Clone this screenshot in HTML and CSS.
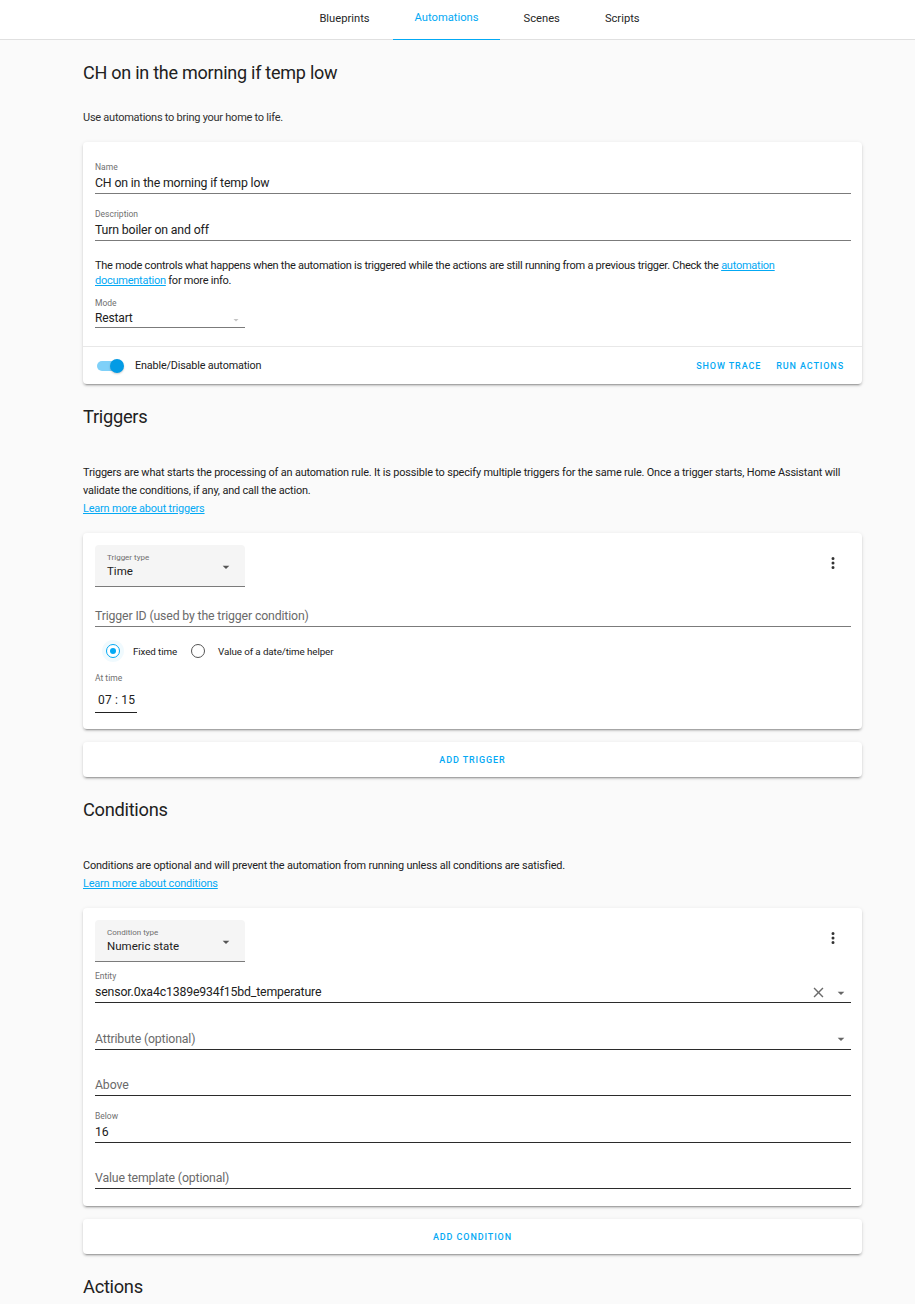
FILE: index.html
```html
<!DOCTYPE html>
<html lang="en">
<head>
<meta charset="utf-8">
<title>Automation editor</title>
<link rel="stylesheet" href="styles.css">
</head>
<body>
<header class="topbar">
  <nav class="tabs">
    <span class="tab">Blueprints</span>
    <span class="tab active">Automations</span>
    <span class="tab">Scenes</span>
    <span class="tab">Scripts</span>
  </nav>
</header>

<main class="content">
  <h1 class="page-title">CH on in the morning if temp low</h1>
  <p class="intro">Use automations to bring your home to life.</p>

  <section class="card">
    <div class="card-body first">
      <div class="field">
        <div class="f-label">Name</div>
        <div class="f-value">CH on in the morning if temp low</div>
      </div>
      <div class="field">
        <div class="f-label">Description</div>
        <div class="f-value">Turn boiler on and off</div>
      </div>
      <p class="mode-text">The mode controls what happens when the automation is triggered while the actions are still running from a previous trigger. Check the <a class="link">automation</a><br><a class="link">documentation</a> for more info.</p>
      <div class="field mode">
        <div class="f-label">Mode</div>
        <div class="f-value">Restart
          <svg class="drop light" viewBox="0 0 24 24"><path d="M7,10L12,15L17,10H7Z"/></svg>
        </div>
      </div>
    </div>
    <div class="card-actions">
      <div class="toggle-wrap">
        <span class="toggle"><span class="track"></span><span class="knob"></span></span>
        <span class="toggle-label">Enable/Disable automation</span>
      </div>
      <div class="btns">
        <span class="btn">Show trace</span>
        <span class="btn">Run actions</span>
      </div>
    </div>
  </section>

  <h2 class="section-title">Triggers</h2>
  <p class="section-text">Triggers are what starts the processing of an automation rule. It is possible to specify multiple triggers for the same rule. Once a trigger starts, Home Assistant will validate the conditions, if any, and call the action.<br><a class="link">Learn more about triggers</a></p>

  <section class="card">
    <div class="card-body boxed">
      <div class="type-row">
        <div class="select-box">
          <div class="sb-label">Trigger type</div>
          <div class="sb-value">Time</div>
          <svg class="drop dark" viewBox="0 0 24 24"><path d="M7,10L12,15L17,10H7Z"/></svg>
        </div>
        <svg class="kebab" viewBox="0 0 24 24"><path d="M12,16A2,2 0 0,1 14,18A2,2 0 0,1 12,20A2,2 0 0,1 10,18A2,2 0 0,1 12,16M12,10A2,2 0 0,1 14,12A2,2 0 0,1 12,14A2,2 0 0,1 10,12A2,2 0 0,1 12,10M12,4A2,2 0 0,1 14,6A2,2 0 0,1 12,8A2,2 0 0,1 10,6A2,2 0 0,1 12,4Z"/></svg>
      </div>
      <div class="field after-box">
        <div class="f-label"></div>
        <div class="f-value placeholder">Trigger ID (used by the trigger condition)</div>
      </div>
      <div class="radios">
        <span class="radio checked"><span class="dot"></span></span>
        <span class="radio-label">Fixed time</span>
        <span class="radio"></span>
        <span class="radio-label">Value of a date/time helper</span>
      </div>
      <div class="time-field">
        <div class="f-label">At time</div>
        <div class="time-value">07 : 15</div>
      </div>
    </div>
  </section>

  <section class="card add-card"><span class="btn">Add trigger</span></section>

  <h2 class="section-title">Conditions</h2>
  <p class="section-text">Conditions are optional and will prevent the automation from running unless all conditions are satisfied.<br><a class="link">Learn more about conditions</a></p>

  <section class="card">
    <div class="card-body boxed cond">
      <div class="type-row">
        <div class="select-box">
          <div class="sb-label">Condition type</div>
          <div class="sb-value">Numeric state</div>
          <svg class="drop dark" viewBox="0 0 24 24"><path d="M7,10L12,15L17,10H7Z"/></svg>
        </div>
        <svg class="kebab" viewBox="0 0 24 24"><path d="M12,16A2,2 0 0,1 14,18A2,2 0 0,1 12,20A2,2 0 0,1 10,18A2,2 0 0,1 12,16M12,10A2,2 0 0,1 14,12A2,2 0 0,1 12,14A2,2 0 0,1 10,12A2,2 0 0,1 12,10M12,4A2,2 0 0,1 14,6A2,2 0 0,1 12,8A2,2 0 0,1 10,6A2,2 0 0,1 12,4Z"/></svg>
      </div>
      <div class="field after-box dark-line">
        <div class="f-label">Entity</div>
        <div class="f-value">sensor.0xa4c1389e934f15bd_temperature
          <span class="icons">
            <svg class="close" viewBox="0 0 24 24"><path d="M19,6.41L17.59,5L12,10.59L6.41,5L5,6.41L10.59,12L5,17.59L6.41,19L12,13.41L17.59,19L19,17.59L13.41,12L19,6.41Z"/></svg>
            <svg class="drop mid" viewBox="0 0 24 24"><path d="M7,10L12,15L17,10H7Z"/></svg>
          </span>
        </div>
      </div>
      <div class="field dark-line">
        <div class="f-label"></div>
        <div class="f-value placeholder">Attribute (optional)
          <span class="icons"><svg class="drop mid" viewBox="0 0 24 24"><path d="M7,10L12,15L17,10H7Z"/></svg></span>
        </div>
      </div>
      <div class="field dark-line">
        <div class="f-label"></div>
        <div class="f-value placeholder">Above</div>
      </div>
      <div class="field dark-line">
        <div class="f-label">Below</div>
        <div class="f-value">16</div>
      </div>
      <div class="field dark-line">
        <div class="f-label"></div>
        <div class="f-value placeholder">Value template (optional)</div>
      </div>
    </div>
  </section>

  <section class="card add-card"><span class="btn">Add condition</span></section>

  <h2 class="section-title">Actions</h2>
</main>
</body>
</html>
```

FILE: styles.css
```css
* { box-sizing: border-box; }

html, body {
  margin: 0;
  padding: 0;
  background: #fafafa;
  font-family: Roboto, "Liberation Sans", Arial, sans-serif;
  color: #212121;
}

.topbar {
  height: 40px;
  background: #ffffff;
  border-bottom: 1px solid #e0e0e0;
}

.tabs {
  display: flex;
  justify-content: center;
  padding-left: 44px;
  height: 39px;
}

.tab {
  display: flex;
  align-items: center;
  padding: 0 22.5px 3px;
  font-size: 11.2px;
  font-weight: 400;
  color: #262626;
}

.tab.active {
  color: #03a9f4;
  padding: 0 21.5px 5px;
  border-bottom: 1px solid #03a9f4;
  height: 40px;
  margin: 0 1px -1px;
}

.content {
  padding: 0 53px 0 83px;
}

.page-title {
  margin: 21px 0 0;
  font-size: 18px;
  line-height: 24px;
  font-weight: 400;
  color: #212121;
  letter-spacing: -0.25px;
}

.intro {
  margin: 24px 0 0;
  font-size: 11px;
  line-height: 18px;
  color: #303030;
  letter-spacing: -0.25px;
}

.card {
  background: #ffffff;
  border-radius: 4px;
  box-shadow: 0 2px 2px 0 rgba(0,0,0,0.14), 0 1px 4px 0 rgba(0,0,0,0.10), 0 3px 1px -2px rgba(0,0,0,0.2);
  margin-top: 15px;
}

.card-body {
  padding: 19px 11px 18px 12px;
}

.card-body.boxed {
  padding: 12px 11px 16px 12px;
}

.card-body.cond {
  padding-bottom: 17px;
}

.field {
  margin-top: 14px;
  border-bottom: 1px solid #7b7b7b;
}

.cond .field { margin-top: 13.5px; }
.field:first-child { margin-top: 0; }
.field.after-box { margin-top: 7px; }
.cond .field.after-box { margin-top: 8px; }
.field.dark-line { border-bottom-color: #2b2b2b; }

.f-label {
  height: 12px;
  font-size: 8.5px;
  line-height: 12px;
  color: #6f6f6f;
  margin-bottom: 2px;
}

.f-value {
  position: relative;
  font-size: 12.3px;
  line-height: 16px;
  padding-bottom: 2px;
  color: #212121;
  letter-spacing: -0.15px;
}

.f-value.placeholder { color: #6a6a6a; }

.mode-text {
  margin: 17px 0 0;
  font-size: 11px;
  line-height: 15px;
  color: #212121;
  letter-spacing: -0.25px;
}

.link {
  color: #03a9f4;
  text-decoration: underline;
}

.field.mode {
  width: 150px;
  margin-top: 9px;
}

.field.mode .f-label { margin-bottom: 2px; }
.field.mode .f-value { line-height: 15px; font-size: 12px; padding-bottom: 1px; }

.drop {
  width: 14px;
  height: 14px;
  fill: #757575;
}

.drop.light {
  position: absolute;
  right: 3px;
  top: 3px;
  fill: #c4c4c4;
  width: 12px;
  height: 12px;
}

.card-actions {
  border-top: 1px solid #e8e8e8;
  height: 38px;
  display: flex;
  align-items: center;
  justify-content: space-between;
  padding: 0 18px 0 14px;
}

.toggle-wrap {
  display: flex;
  align-items: center;
}

.toggle {
  position: relative;
  width: 28px;
  height: 16px;
  display: inline-block;
}

.track {
  position: absolute;
  left: 0;
  top: 3px;
  width: 26px;
  height: 10px;
  border-radius: 5px;
  background: #7fd0f8;
}

.knob {
  position: absolute;
  right: 1px;
  top: 1px;
  width: 14px;
  height: 14px;
  border-radius: 50%;
  background: #039be5;
  box-shadow: 0 1px 2px rgba(0,0,0,0.2);
}

.toggle-label {
  margin-left: 10px;
  font-size: 10.8px;
  color: #212121;
  letter-spacing: -0.15px;
}

.btns {
  display: flex;
  gap: 15px;
}

.btn {
  font-size: 9px;
  font-weight: 500;
  text-transform: uppercase;
  letter-spacing: 0.9px;
  color: #03a9f4;
}

.section-title {
  margin: 21px 0 0;
  font-size: 18.3px;
  line-height: 24px;
  font-weight: 400;
  color: #212121;
  letter-spacing: -0.3px;
}

.section-text {
  margin: 35px 0 0;
  font-size: 10.9px;
  line-height: 18px;
  color: #212121;
  letter-spacing: -0.16px;
}

.type-row {
  display: flex;
  justify-content: space-between;
  align-items: flex-start;
}

.select-box {
  position: relative;
  width: 150px;
  height: 42px;
  background: #f5f5f5;
  border-radius: 4px 4px 0 0;
  border-bottom: 1px solid #7b7b7b;
  padding: 7px 12px 0;
}

.sb-label {
  font-size: 8px;
  line-height: 11px;
  color: #6f6f6f;
}

.sb-value {
  font-size: 11.5px;
  line-height: 16px;
  color: #212121;
}

.drop.dark {
  position: absolute;
  right: 11px;
  top: 14px;
  width: 16px;
  height: 16px;
  fill: #555555;
}

.kebab {
  width: 18px;
  height: 18px;
  fill: #333333;
  margin: 9px 9px 0 0;
}

.radios {
  display: flex;
  align-items: center;
  height: 24px;
  margin-top: 12px;
  padding-left: 11px;
}

.radio {
  width: 14px;
  height: 14px;
  border-radius: 50%;
  border: 1.5px solid #555;
  display: flex;
  align-items: center;
  justify-content: center;
  background: #fff;
}

.radio.checked {
  border-color: #03a9f4;
  box-shadow: 0 0 0 4px rgba(3,169,244,0.06);
}

.dot {
  width: 6px;
  height: 6px;
  border-radius: 50%;
  background: #03a9f4;
}

.radio-label {
  font-size: 9.8px;
  color: #212121;
  margin: 0 14px 0 13px;
  letter-spacing: -0.1px;
}

.time-field {
  margin-top: 9px;
}

.time-field .f-label {
  margin-bottom: 5px;
}

.time-value {
  display: inline-block;
  width: 42px;
  padding: 0 0 4px 3px;
  font-size: 12px;
  line-height: 16px;
  color: #212121;
  border-bottom: 1px solid #212121;
  letter-spacing: 0.2px;
}

.icons {
  position: absolute;
  right: 2px;
  top: 0;
  display: flex;
  align-items: center;
  gap: 6px;
}

.close {
  width: 17px;
  height: 17px;
  fill: #6b6b6b;
}

.drop.mid {
  width: 16px;
  height: 16px;
  fill: #666;
}

.add-card {
  margin-top: 13px;
  height: 35px;
  display: flex;
  align-items: center;
  justify-content: center;
}
```
